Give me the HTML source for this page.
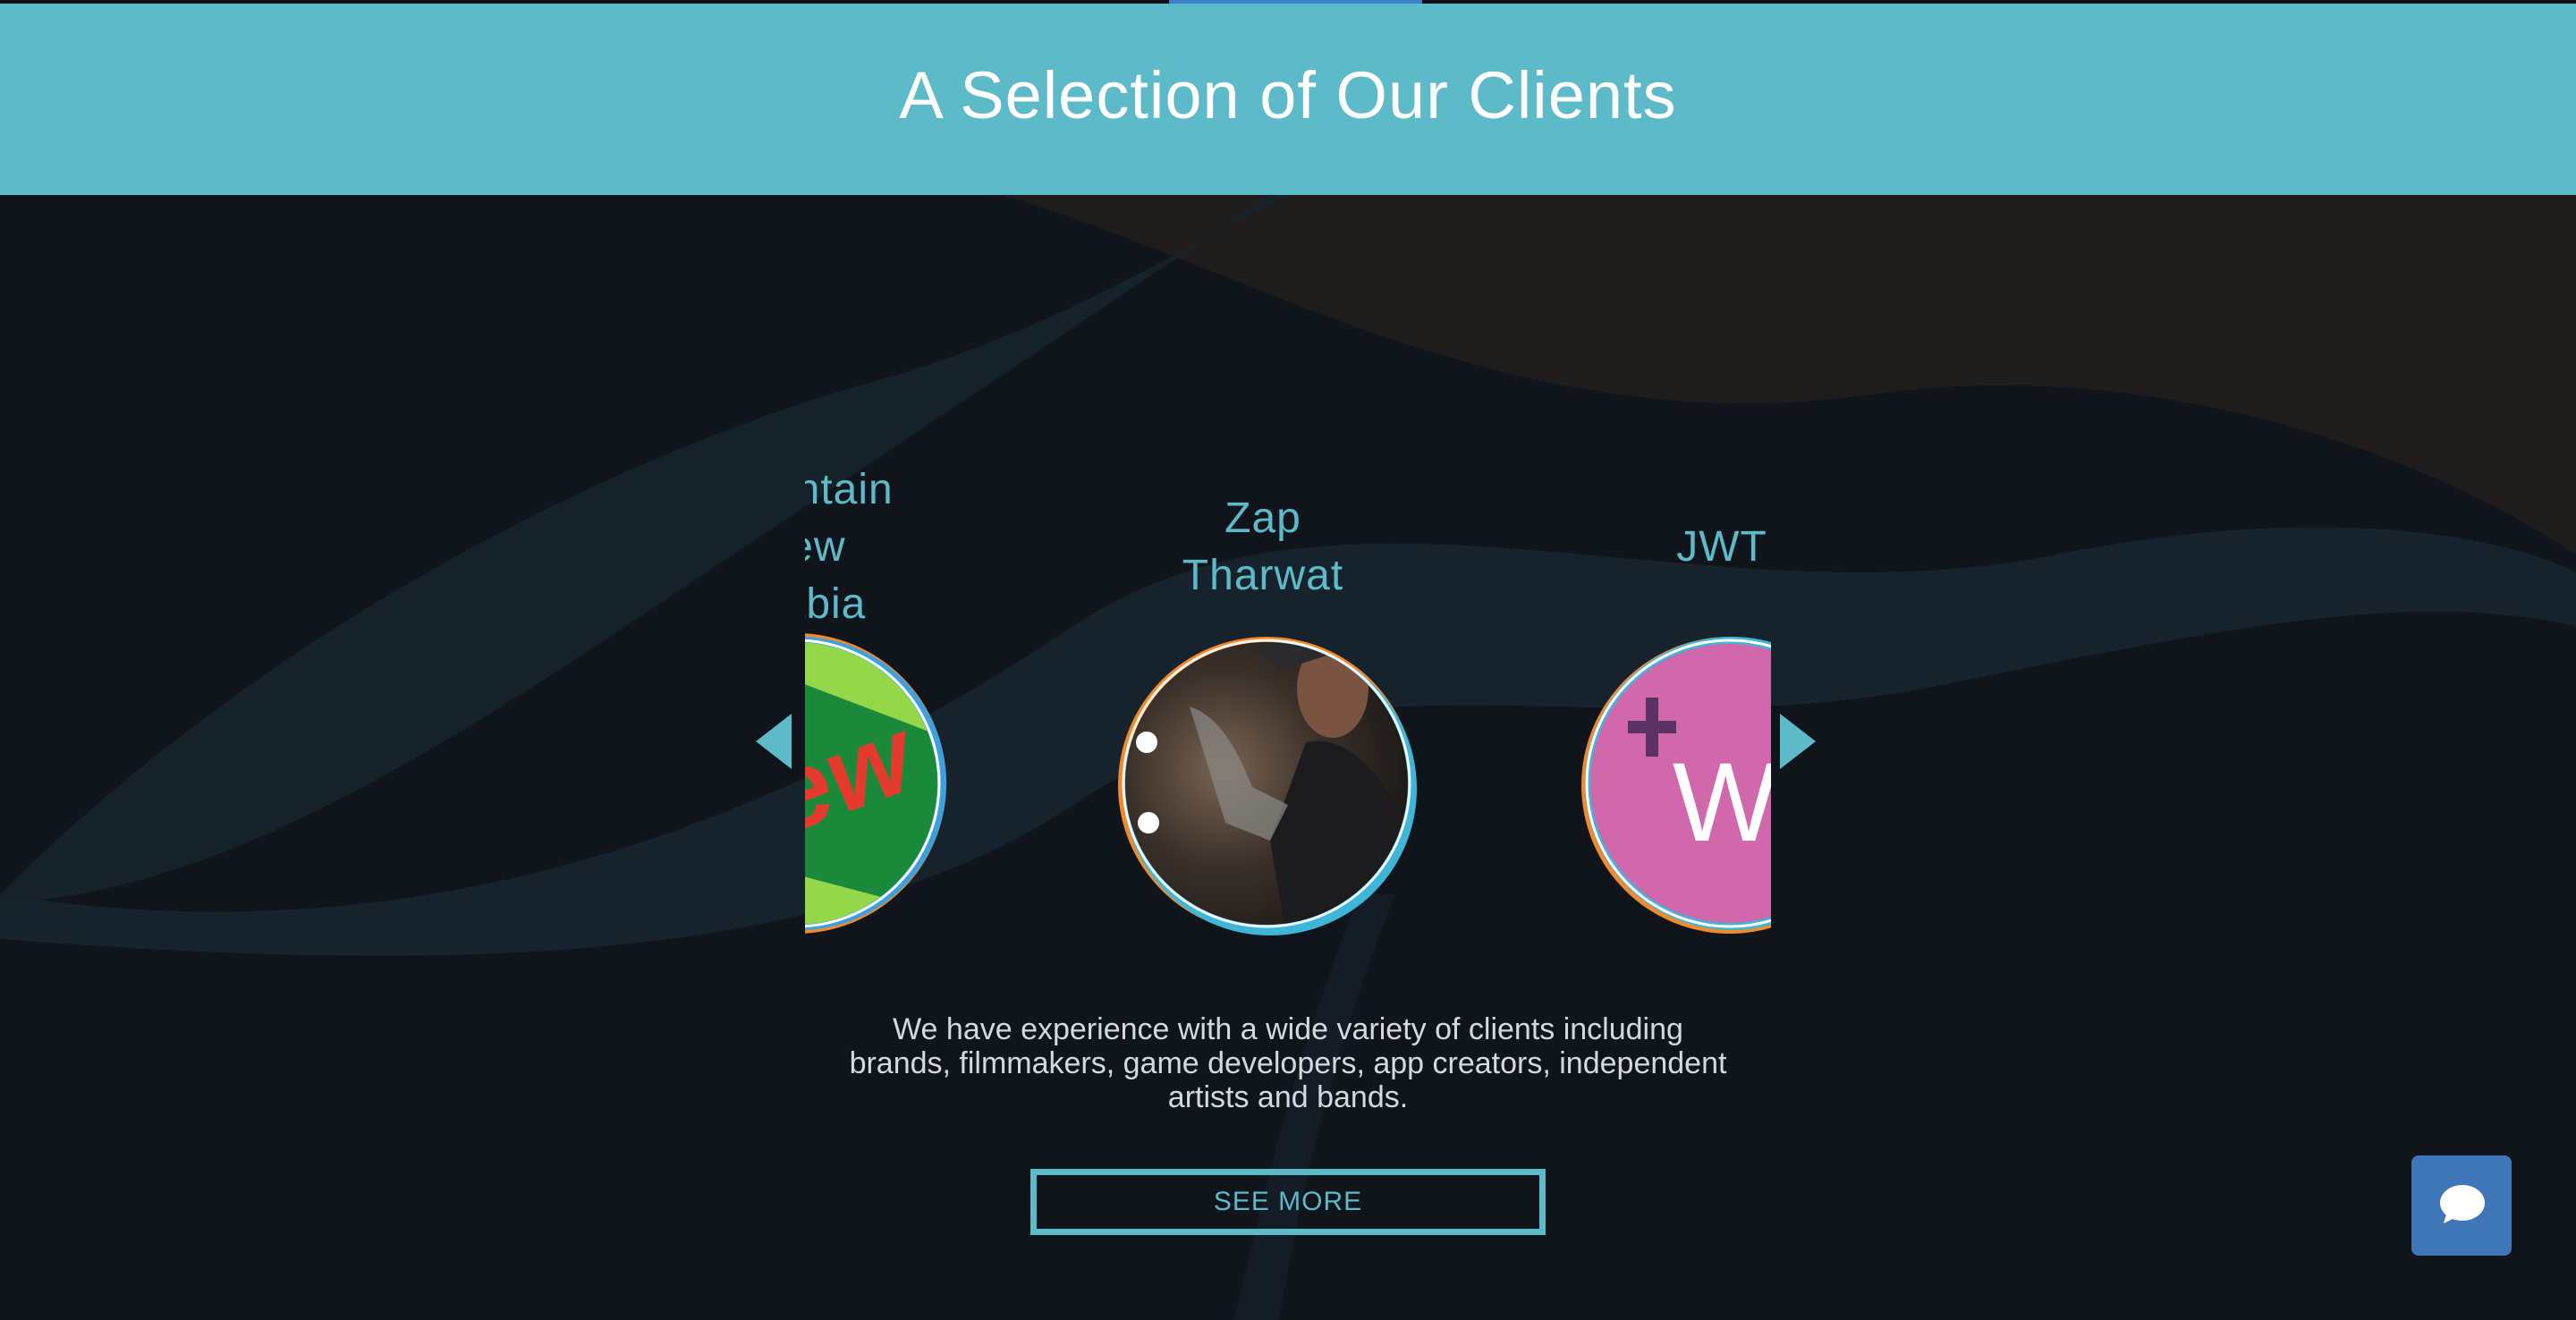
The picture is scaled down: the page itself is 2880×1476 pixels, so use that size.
<!DOCTYPE html>
<html><head><meta charset="utf-8"><style>
*{margin:0;padding:0;box-sizing:border-box}
html,body{width:2880px;height:1476px;overflow:hidden;background:#10141b;font-family:"Liberation Sans",sans-serif}
.top{position:absolute;left:0;top:0;width:2880px;height:4px;background:#0c1218}
.top i{position:absolute;top:0;height:4px;background:#3d80c8;left:1307px;width:283px}
.hdr{position:absolute;left:0;top:4px;width:2880px;height:214px;background:#5dbac8}
.t{position:absolute;white-space:nowrap}
.title{left:0;width:2880px;top:62px;text-align:center;color:#fff;font-size:74px;line-height:90px;letter-spacing:1px}
.lbl{color:#5dbac8;font-size:48px;line-height:64px;text-align:center;letter-spacing:1px}
.para{left:0;width:2880px;top:1132px;text-align:center;color:#d4d9e0;font-size:34px;line-height:38px}
.btn{position:absolute;left:1152px;top:1307px;width:576px;height:74px;border:7px solid #5dbac8;color:#5dbac8;text-align:center;font-size:30px;line-height:60px;letter-spacing:1px}
.chat{position:absolute;left:2696px;top:1292px;width:112px;height:112px;background:#3f76b8;border-radius:8px}
</style></head><body>
<svg style="position:absolute;left:0;top:0" width="2880" height="1476">
<path d="M1120 218 C1400 300 1700 500 2100 440 C2400 400 2700 500 2880 620 L2880 218 Z" fill="#1f1c1c"/>
<path d="M0 1000 C500 1080 900 900 1200 700 C1500 500 1900 700 2300 620 C2600 560 2800 600 2880 640 L2880 700 C2700 660 2500 700 2200 760 C1800 850 1500 700 1200 900 C900 1100 400 1080 0 1050 Z" fill="#17232c"/>
<path d="M0 1000 C300 700 700 500 1000 420 C1200 360 1350 260 1440 218 L1420 218 C1300 300 1000 500 700 700 C400 900 200 1000 0 1010Z" fill="#16222a"/>
<path d="M1380 1476 C1420 1300 1460 1150 1520 1000 L1560 1000 C1500 1150 1460 1300 1430 1476Z" fill="#141c25"/>
</svg>
<div class="top"><i></i></div>
<div class="hdr"></div>
<div class="t title">A Selection of Our Clients</div>

<div style="position:absolute;left:900px;top:500px;width:1080px;height:560px;overflow:hidden">
 <div class="t lbl" style="left:-204px;width:400px;top:16px">Mountain<br>Dew<br>Arabia</div>
 <div class="t lbl" style="left:312px;width:400px;top:48px">Zap<br>Tharwat</div>
 <div class="t lbl" style="left:925px;width:200px;top:80px">JWT</div>
 <svg style="position:absolute;left:0;top:0" width="1080" height="560">
  <defs>
   <radialGradient id="ph" cx="0.35" cy="0.45" r="0.7"><stop offset="0" stop-color="#7a6452"/><stop offset="0.5" stop-color="#3a3029"/><stop offset="1" stop-color="#1a1716"/></radialGradient>
   <clipPath id="c1"><circle cx="516" cy="376" r="158"/></clipPath>
   <clipPath id="c0"><circle cx="-10" cy="376" r="158"/></clipPath>
  </defs>
  <circle cx="-10" cy="376" r="168" fill="#f08a2c"/>
  <circle cx="-6" cy="376" r="164" fill="#3aa0e0"/>
  <circle cx="-10" cy="376" r="158" fill="#94d84a"/>
  <g clip-path="url(#c0)">
   <path d="M-40 250 L170 330 L150 520 L-40 470Z" fill="#1a8a3a"/>
   <text x="-30" y="410" font-size="120" font-weight="bold" fill="#e53a2e" font-style="italic" font-family="Liberation Sans" transform="rotate(-20 40 400)">ew</text>
  </g>
  <circle cx="-10" cy="376" r="160" fill="none" stroke="#fff" stroke-width="3"/>
  <circle cx="516" cy="378" r="166" fill="#f08a2c"/>
  <circle cx="520" cy="382" r="164" fill="#3fb6d8"/>
  <circle cx="516" cy="376" r="158" fill="url(#ph)"/>
  <g clip-path="url(#c1)">
   <path d="M560 330 C600 320 640 360 660 400 L680 560 L540 560 L520 440Z" fill="#1c1b1d"/>
   <path d="M430 290 C460 300 480 330 500 380 L540 400 L520 440 L470 420Z" fill="#8a8a88" opacity="0.7"/>
   <ellipse cx="590" cy="270" rx="40" ry="55" fill="#7a5440"/>
   <path d="M500 220 L580 190 L640 215 L530 250Z" fill="#2a2a2c"/>
  </g>
  <circle cx="382" cy="330" r="12" fill="#fff"/>
  <circle cx="384" cy="420" r="12" fill="#fff"/>
  <circle cx="516" cy="376" r="160" fill="none" stroke="#fff" stroke-width="3" opacity="0.9"/>
  <circle cx="1034" cy="378" r="166" fill="#f08a2c"/>
  <circle cx="1036" cy="376" r="164" fill="#3fb6d8"/>
  <circle cx="1034" cy="376" r="156" fill="#d168ab"/>
  <circle cx="1034" cy="376" r="160" fill="none" stroke="#fff" stroke-width="3"/>
  <path d="M920 306 h20 v-26 h14 v26 h20 v14 h-20 v26 h-14 v-26 h-20z" fill="#5c3266"/>
  <text x="970" y="440" font-size="125" fill="#fff" font-family="Liberation Sans">W</text>
 </svg>
</div>
<svg style="position:absolute;left:845px;top:798px" width="40" height="62"><path d="M40 0 L40 62 L0 31Z" fill="#5dbac8"/></svg>
<svg style="position:absolute;left:1990px;top:798px" width="40" height="62"><path d="M0 0 L0 62 L40 31Z" fill="#5dbac8"/></svg>

<div class="t para"><div>We have experience with a wide variety of clients including</div><div>brands, filmmakers, game developers, app creators, independent</div><div>artists and bands.</div></div>
<div class="btn">SEE MORE</div>
<div class="chat"><svg width="112" height="112"><ellipse cx="57" cy="53" rx="25" ry="20" fill="#fff"/><path d="M40 62 L36 76 L52 68Z" fill="#fff"/></svg></div>
</body></html>
